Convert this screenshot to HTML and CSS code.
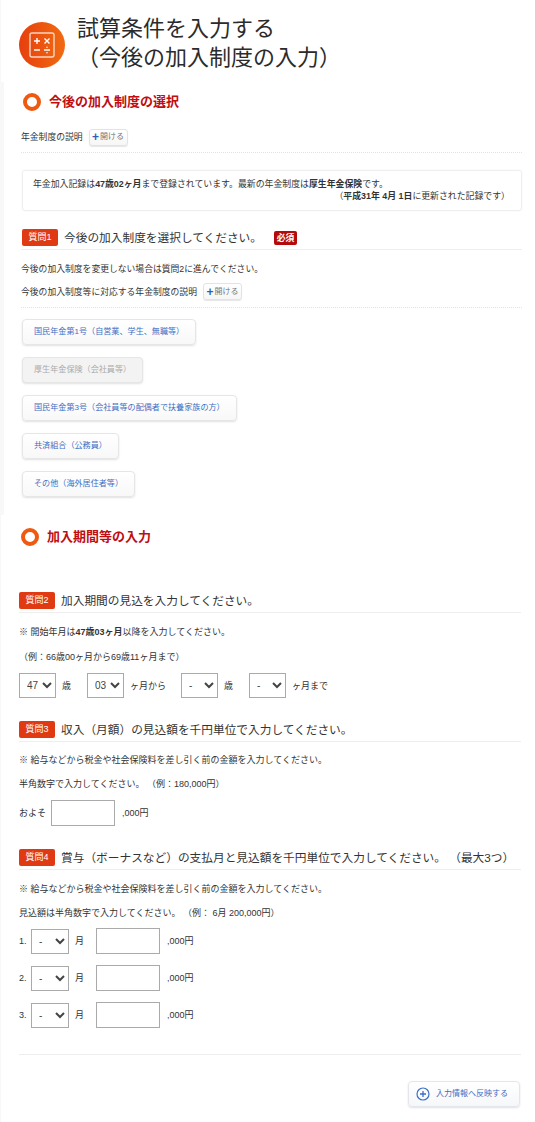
FILE: index.html
```html
<!DOCTYPE html>
<html lang="ja">

<head>
    <meta charset="UTF-8">
    <meta name="viewport" content="width=device-width, initial-scale=1.0">
    <title>試算条件を入力する</title>
    <link rel="stylesheet" href="styles.css">
</head>

<body>
    <!-- ヘッダー -->
    <header class="page-head">
        <span class="calc-icon">
            <svg width="28" height="28" viewBox="0 0 28 28" fill="none" stroke="#fff" stroke-width="1.4">
                <rect x="2" y="2" width="24" height="24" rx="2" opacity=".75"/>
                <path d="M6 10h6M9 7v6M16.5 7.5l5 5M21.5 7.5l-5 5M6 19h6M16 19h6"/>
                <path d="M19 15.8v1M19 21.2v1" stroke-width="1.6"/>
            </svg>
        </span>
        <h1>試算条件を入力する<br>（今後の加入制度の入力）</h1>
    </header>

    <!-- 今後の加入制度の選択 -->
    <section class="select-area">
        <h2 class="sec-title"><span class="ring"></span>今後の加入制度の選択</h2>
        <div class="guide first-guide">
            <span>年金制度の説明</span>
            <button class="open-btn"><b>+</b>開ける</button>
        </div>
        <div class="record">
            <p>年金加入記録は<b>47歳02ヶ月</b>まで登録されています。最新の年金制度は<b>厚生年金保険</b>です。</p>
            <p class="record-date">（<b>平成31年 4月 1日</b>に更新された記録です）</p>
        </div>
        <div class="q-head q1-head">
            <span class="q-badge">質問1</span>
            <span class="q-text">今後の加入制度を選択してください。</span>
            <span class="must">必須</span>
        </div>
        <p class="note q1-note">今後の加入制度を変更しない場合は質問2に進んでください。</p>
        <div class="guide">
            <span>今後の加入制度等に対応する年金制度の説明</span>
            <button class="open-btn"><b>+</b>開ける</button>
        </div>
        <div class="choices">
            <button class="choice">国民年金第1号（自営業、学生、無職等）</button>
            <button class="choice off">厚生年金保険（会社員等）</button>
            <button class="choice">国民年金第3号（会社員等の配偶者で扶養家族の方）</button>
            <button class="choice">共済組合（公務員）</button>
            <button class="choice">その他（海外居住者等）</button>
        </div>
    </section>

    <!-- 加入期間等の入力 -->
    <section class="input-area">
        <h2 class="sec-title"><span class="ring"></span>加入期間等の入力</h2>

        <div class="q-head q2-head">
            <span class="q-badge">質問2</span>
            <span class="q-text">加入期間の見込を入力してください。</span>
        </div>
        <p class="note n1">※ 開始年月は<b>47歳03ヶ月</b>以降を入力してください。</p>
        <p class="note n2">（例：66歳00ヶ月から69歳11ヶ月まで）</p>
        <div class="period">
            <select><option>47</option></select><span class="unit u1">歳</span>
            <select><option>03</option></select><span class="unit u2">ヶ月から</span>
            <select><option>-</option></select><span class="unit u1">歳</span>
            <select><option>-</option></select><span class="unit">ヶ月まで</span>
        </div>

        <div class="q-head q3-head">
            <span class="q-badge">質問3</span>
            <span class="q-text">収入（月額）の見込額を千円単位で入力してください。</span>
        </div>
        <p class="note n3">※ 給与などから税金や社会保険料を差し引く前の金額を入力してください。</p>
        <p class="note n4">半角数字で入力してください。 （例：180,000円）</p>
        <div class="income">
            <span>およそ</span>
            <input type="text">
            <span>,000円</span>
        </div>

        <div class="q-head q4-head">
            <span class="q-badge">質問4</span>
            <span class="q-text">賞与（ボーナスなど）の支払月と見込額を千円単位で入力してください。 （最大3つ）</span>
        </div>
        <p class="note n5">※ 給与などから税金や社会保険料を差し引く前の金額を入力してください。</p>
        <p class="note n6">見込額は半角数字で入力してください。 （例： 6月 200,000円）</p>
        <div class="bonus">
            <span class="no">1.</span><select><option>-</option></select><span class="month">月</span>
            <input type="text"><span>,000円</span>
        </div>
        <div class="bonus">
            <span class="no">2.</span><select><option>-</option></select><span class="month">月</span>
            <input type="text"><span>,000円</span>
        </div>
        <div class="bonus">
            <span class="no">3.</span><select><option>-</option></select><span class="month">月</span>
            <input type="text"><span>,000円</span>
        </div>

        <div class="foot">
            <button class="apply">
                <svg width="14" height="14" viewBox="0 0 14 14" fill="none" stroke="#3b6fc9">
                    <circle cx="7" cy="7" r="6" stroke-width="1.2"/>
                    <path d="M7 4v6M4 7h6" stroke-width="1.3"/>
                </svg>
                入力情報へ反映する
            </button>
        </div>
    </section>
</body>

</html>
```

FILE: styles.css
```css
* {
    padding: 0;
    margin: 0;
    box-sizing: border-box;
}

body {
    width: 535px;
    height: 1122px;
    overflow: hidden;
    background: #fff;
    color: #333;
    font-family: "Liberation Sans", "Noto Sans CJK JP", sans-serif;
    font-size: 8.8px;
    line-height: 12px;
}

/* ヘッダー */
.page-head {
    display: flex;
    height: 82px;
    padding: 14px 0 0 18px;
    border-left: 1px solid #f8f8f8;
}

.calc-icon {
    display: flex;
    align-items: center;
    justify-content: center;
    width: 46px;
    height: 46px;
    margin-top: 8px;
    border-radius: 50%;
    background: linear-gradient(90deg, #e63f0e, #f16b11);
}

.page-head h1 {
    margin-left: 12px;
    font-size: 22px;
    font-weight: normal;
    line-height: 29px;
    color: #2b2b2b;
}

/* 見出し */
.sec-title {
    display: flex;
    align-items: center;
    height: 20px;
    font-size: 13px;
    font-weight: bold;
    color: #c00d12;
}

.ring {
    width: 18px;
    height: 18px;
    margin-right: 8px;
    border: 4px solid #ef5a10;
    border-radius: 50%;
}

/* 選択エリア */
.select-area {
    height: 433px;
    padding: 10px 13px 0 17px;
    border-left: 4px solid #f8f8f8;
}

.select-area .sec-title {
    padding-left: 2px;
}

.guide {
    display: flex;
    align-items: center;
    height: 24px;
    padding-bottom: 7px;
    border-bottom: 1px dotted #e2e2e2;
}

.first-guide {
    margin-top: 17px;
}

.open-btn {
    display: flex;
    align-items: center;
    justify-content: center;
    width: 39px;
    height: 17px;
    margin-left: 6px;
    border: 1px solid #e3e3e3;
    border-radius: 3px;
    background: linear-gradient(#fff, #f6f6f6);
    box-shadow: 0 1px 1px rgba(0, 0, 0, .1);
    color: #777;
    font: inherit;
    font-size: 8px;
}

.open-btn b {
    margin-right: 1px;
    color: #2f5fb8;
    font-size: 12px;
    line-height: 12px;
}

.record {
    height: 41px;
    margin: 17px 0 0 1px;
    padding: 7px 11px 0 10px;
    border: 1px solid #eee;
    border-radius: 3px;
    box-shadow: 0 0 2px rgba(0, 0, 0, .05);
    font-size: 8.9px;
}

.record-date {
    text-align: right;
}

/* 質問 */
.q-head {
    display: flex;
    align-items: center;
    height: 21px;
    border-bottom: 1px solid #eee;
    padding-bottom: 3px;
}

.q-badge {
    width: 36px;
    height: 17px;
    margin-right: 6px;
    border-radius: 2px;
    background: #e03a12;
    color: #fff;
    font-size: 9px;
    line-height: 17px;
    text-align: center;
}

.q-text {
    font-size: 11.7px;
    color: #333;
}

.must {
    width: 23px;
    height: 14px;
    margin-left: 12px;
    border-radius: 2px;
    background: #b50a0a;
    color: #fff;
    font-family: "Liberation Serif", "Noto Sans CJK JP", serif;
    font-weight: bold;
    line-height: 14px;
    text-align: center;
}

.q1-head {
    margin-top: 18px;
}

.q1-head .q-badge {
    margin-left: 1px;
}

.q1-note {
    margin-top: 13px;
}

.note + .guide {
    margin-top: 8px;
    height: 25px;
}

.choices {
    display: flex;
    flex-direction: column;
    align-items: flex-start;
    gap: 12px;
    margin: 11px 0 0 1px;
}

.choice {
    height: 26px;
    padding: 0 11px;
    border: 1px solid #e6e6e6;
    border-radius: 4px;
    background: linear-gradient(#fff, #f8f8f8);
    box-shadow: 0 1px 2px rgba(0, 0, 0, .12);
    color: #3d6fc4;
    font: inherit;
    font-size: 8.1px;
}

.choice.off {
    background: #f3f3f3;
    color: #aaa;
}

/* 入力エリア */
.input-area {
    height: 607px;
    padding: 12px 14px 0 18px;
    border-left: 1px solid #f8f8f8;
    font-size: 9px;
}

.input-area .sec-title {
    margin-left: 2px;
}

.q2-head {
    margin-top: 45px;
}

.note {
    height: 12px;
}

.n1 {
    margin-top: 13px;
}

.n2 {
    margin-top: 13px;
}

.n3 {
    margin-top: 12px;
}

.n4 {
    margin-top: 12px;
}

.n5 {
    margin-top: 13px;
}

.n6 {
    margin-top: 12px;
}

select {
    width: 37px;
    height: 25px;
    padding-left: 3px;
    border: 1px solid #aaa;
    border-radius: 0;
    background: #fff;
    color: #444;
    font: inherit;
    font-size: 10px;
}

input {
    width: 64px;
    height: 26px;
    border: 1px solid #aaa;
    background: #fff;
}

.period {
    display: flex;
    align-items: center;
    margin-top: 10px;
}

.unit {
    margin-left: 6px;
}

.u1 {
    margin-right: 16px;
}

.u2 {
    margin-right: 15px;
}

.q3-head {
    margin-top: 23px;
}

.income {
    display: flex;
    align-items: center;
    gap: 5px;
    margin-top: 10px;
}

.income input {
    margin-right: 2px;
}

.q4-head {
    margin-top: 23px;
}

.bonus {
    display: flex;
    align-items: center;
    height: 26px;
    margin-top: 11px;
}

.n6 + .bonus {
    margin-top: 9px;
}

.no {
    width: 12px;
}

.bonus select {
    width: 38px;
}

.month {
    width: 21px;
    margin-left: 6px;
}

.bonus input {
    margin-right: 7px;
}

.foot {
    display: flex;
    justify-content: flex-end;
    margin-top: 26px;
    padding-top: 26px;
    border-top: 1px solid #eee;
}

.apply {
    display: flex;
    align-items: center;
    gap: 6px;
    width: 112px;
    height: 26px;
    margin-right: 1px;
    padding-left: 7px;
    border: 1px solid #e3e6ec;
    border-radius: 4px;
    background: linear-gradient(#fff, #f6f7f9);
    box-shadow: 0 1px 2px rgba(0, 0, 0, .12);
    color: #3d6fc4;
    font: inherit;
    font-size: 8px;
}
```
